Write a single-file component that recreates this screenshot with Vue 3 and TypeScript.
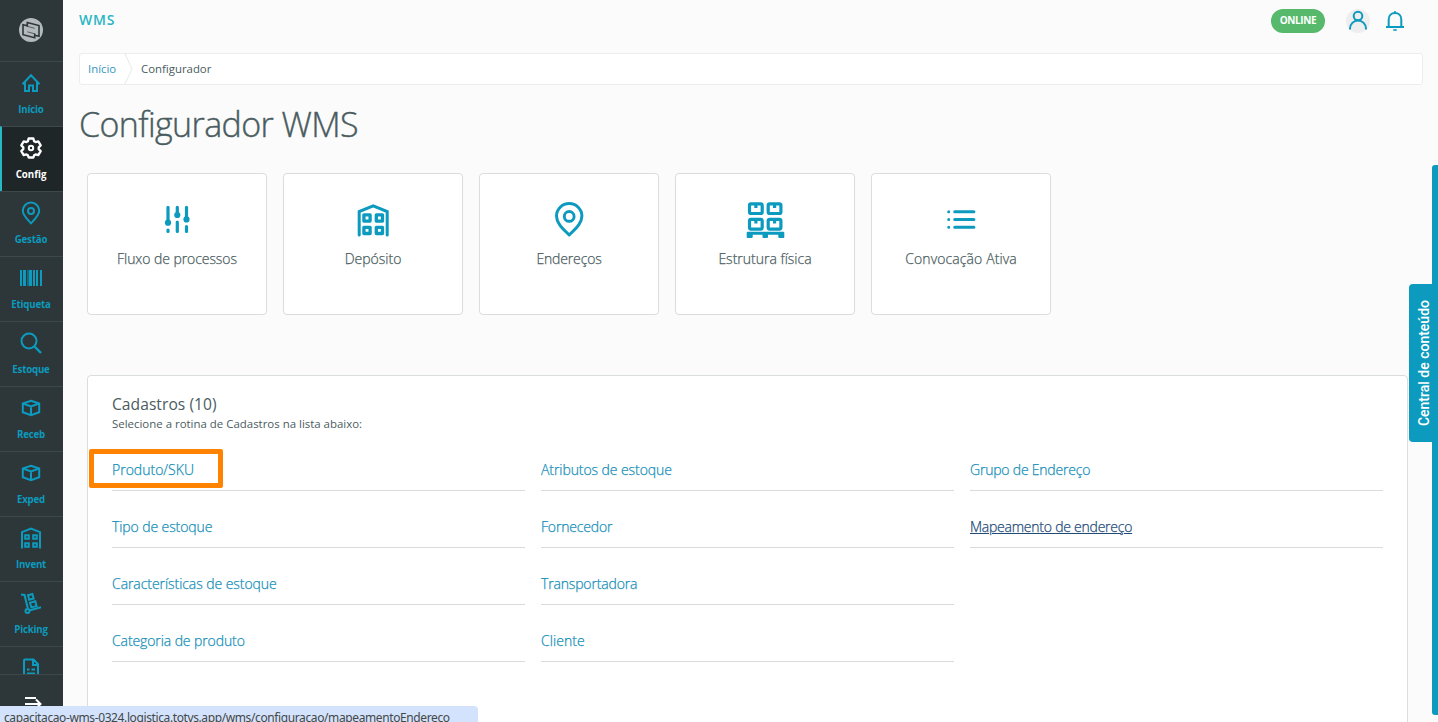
<script setup lang="ts">
interface MenuItem { label: string; icon: string; active?: boolean }
interface Shortcut { label: string; icon: string; tracking: number }
interface Routine { label: string; tracking: number; marked?: boolean; hovered?: boolean }

const menu: MenuItem[] = [
  { label: 'Início', icon: 'home' },
  { label: 'Config', icon: 'gear', active: true },
  { label: 'Gestão', icon: 'pin' },
  { label: 'Etiqueta', icon: 'barcode' },
  { label: 'Estoque', icon: 'search' },
  { label: 'Receb', icon: 'box' },
  { label: 'Exped', icon: 'box' },
  { label: 'Invent', icon: 'warehouse' },
  { label: 'Picking', icon: 'truck' },
  { label: '', icon: 'document' },
]

const shortcuts: Shortcut[] = [
  { label: 'Fluxo de processos', icon: 'sliders', tracking: -0.07 },
  { label: 'Depósito', icon: 'depot', tracking: 0 },
  { label: 'Endereços', icon: 'place', tracking: -0.15 },
  { label: 'Estrutura física', icon: 'pallet', tracking: 0 },
  { label: 'Convocação Ativa', icon: 'list', tracking: 0.1 },
]

const routines: Routine[] = [
  { label: 'Produto/SKU', tracking: 0, marked: true },
  { label: 'Tipo de estoque', tracking: -0.1 },
  { label: 'Características de estoque', tracking: -0.06 },
  { label: 'Categoria de produto', tracking: -0.1 },
  { label: 'Atributos de estoque', tracking: -0.08 },
  { label: 'Fornecedor', tracking: -0.18 },
  { label: 'Transportadora', tracking: -0.16 },
  { label: 'Cliente', tracking: 0.05 },
  { label: 'Grupo de Endereço', tracking: -0.21 },
  { label: 'Mapeamento de endereço', tracking: -0.24, hovered: true },
]
</script>

<template>
  <div class="app">
    <svg class="sprite" aria-hidden="true">
      <symbol id="home" viewBox="0 0 24 24"><path d="M3.500 13.200 12 4.300l8.500 8.900M6 11v9h4v-5.500h4V20h4v-9" /></symbol>
      <symbol id="gear" viewBox="0 0 24 24">
        <path d="M9.600 2.500h4.800l.7 2.700 1.500.9 2.700-.8 2.400 4.100-2 2v1.700l2 2-2.400 4.100-2.700-.8-1.500.9-.7 2.200H9.600l-.7-2.200-1.500-.9-2.700.8-2.400-4.100 2-2v-1.700l-2-2 2.400-4.100 2.700.8 1.500-.9z" stroke-width="2.300" stroke-linejoin="round" />
        <circle cx="12" cy="12" r="2.200" />
      </symbol>
      <symbol id="pin" viewBox="0 0 24 24"><path d="M12 22.300C8 18.200 3.800 14.300 3.800 9.800a8.200 8.200 0 0 1 16.400 0c0 4.500-4.200 8.400-8.200 12.500z" /><circle cx="12" cy="10" r="3" /></symbol>
      <symbol id="barcode" viewBox="0 0 24 24"><path class="solid" d="M1 4h2v16H1zM4 4h3v16H4zM8.500 4h1v16h-1zM10 4h3v16h-3zM14 4h2v16h-2zM17 4h2v16h-2zM21 4h2v16h-2z" /></symbol>
      <symbol id="search" viewBox="0 0 24 24"><circle cx="10" cy="10" r="7.500" /><path d="m15.500 15.500 6.500 6.500" stroke-width="2.400" /></symbol>
      <symbol id="box" viewBox="0 0 24 24"><path d="m12 4.800 8.200 2.700v8.700L12 19.300l-8.200-3.100V7.500zM4 7.500l8 3 8-3M12 10.500v8.800" /></symbol>
      <symbol id="warehouse" viewBox="0 0 24 24"><path d="M3 22.500V6.200L12 2.500l9 3.700v16.300" /><path d="M6.200 9.200h3.600v3.600H6.200zM14.200 9.200h3.600v3.600h-3.600zM6.200 17.200h3.600v3.600H6.200zM14.200 17.200h3.600v3.600h-3.600z" /></symbol>
      <symbol id="truck" viewBox="0 0 24 24"><path d="M2 3.500 5.500 4 9 18M11 19.200l11-3" /><circle cx="8.500" cy="20" r="2" /><path d="m9 4.300 4.400-1.200 1.200 4.400-4.400 1.200zM11 11.700l5.300-1.400 1.300 4.700-5.300 1.400z" /></symbol>
      <symbol id="document" viewBox="0 0 24 24"><path d="M5 22V4.500q0-1 1-1h8.500L19 8.200V22M14 3.500V9h5M8 13.500h2.500M12.500 13.500H16M8 17.500h8" /></symbol>
      <symbol id="sliders" viewBox="0 0 40 40"><path d="M11 8.300v16M11 31v1.500M20.300 8.300v8M20.300 23v9.500M29.500 8.300v12M29.500 27.500v5" stroke-width="3.200" stroke-linecap="round" /><path class="solid" d="M7.900 23.700a3.100 3.100 0 1 0 6.200 0 3.100 3.100 0 1 0-6.200 0M17.200 16a3.100 3.100 0 1 0 6.200 0 3.100 3.100 0 1 0-6.200 0M26.400 20.400a3.100 3.100 0 1 0 6.200 0 3.100 3.100 0 1 0-6.200 0" /></symbol>
      <symbol id="depot" viewBox="0 0 40 40"><path d="M6.200 36V12.500L20.200 6.800l14 5.700V36" stroke-linecap="round" /><path d="M10.900 15.900h6.200v6.200h-6.200zM23.300 15.900h6.200v6.200h-6.200zM10.900 28.300h6.200v6.200h-6.200zM23.300 28.300h6.200v6.200h-6.200z" stroke-linejoin="round" stroke-width="3.300" /></symbol>
      <symbol id="place" viewBox="0 0 40 40"><path d="M20.200 36C14 29.800 7.500 24.500 7.500 17a12.700 12.400 0 0 1 25.400 0C32.900 24.500 26.400 29.800 20.200 36z" stroke-width="3" stroke-linejoin="round" /><circle cx="20.200" cy="17.400" r="4.900" stroke-width="2.900" /></symbol>
      <symbol id="pallet" viewBox="0 0 40 40">
        <g stroke-width="3.200"><rect x="4.500" y="4.800" width="12.700" height="9.700" rx="1.500" /><rect x="23.200" y="4.800" width="12.700" height="9.700" rx="1.500" /><rect x="4.500" y="20.400" width="12.700" height="9.700" rx="1.500" /><rect x="23.200" y="20.400" width="12.700" height="9.700" rx="1.500" /><path d="M10.900 5v4M29.600 5v4M10.900 20.500v4M29.600 20.500v4" /></g>
        <path class="solid" d="M2.700 32.700h35.600q1 0 1 1V38q0 1-1 1h-4q-1 0-1-1v-2.200H23V38q0 1-1 1h-3.500q-1 0-1-1v-2.200H7.700V38q0 1-1 1h-4q-1 0-1-1v-4.300q0-1 1-1z" />
      </symbol>
      <symbol id="list" viewBox="0 0 40 40"><path d="M13.700 12.700h19.200M13.700 20.500h19.200M13.700 28.300h19.200M7.700 12.700h.01M7.700 20.500h.01M7.700 28.300h.01" stroke-width="3" stroke-linecap="round" /></symbol>
    </svg>

    <aside class="sidebar">
      <div class="brand">
        <svg viewBox="0 0 24 24" width="24" height="24">
          <circle cx="12" cy="12" r="12" fill="#b4babb" />
          <path d="M8.300 8.700V4.500l11.700 3v10.700l-4.300-1M15.700 15.500v4.300L4 16.700V6.800l4.300 1" fill="none" stroke="#2d3739" stroke-width="1.600" />
          <path d="m8.300 8.300 7.400 2M8.300 13.800l7.400 2" fill="none" stroke="#2d3739" stroke-width=".7" />
        </svg>
      </div>
      <nav class="menu">
        <a v-for="(item, i) in menu" :key="i" class="menu-item" :class="{ active: item.active }">
          <svg class="icon" width="24" height="24"><use :href="'#' + item.icon" /></svg>
          <span v-if="item.label">{{ item.label }}</span>
        </a>
      </nav>
      <div class="expand">
        <svg width="18" height="14" viewBox="0 0 18 14"><path d="M1 3h11M1 9h15M12 4.500 16.500 9 12 13.500" /></svg>
      </div>
    </aside>

    <main class="page">
      <header class="topbar">
        <strong>WMS</strong>
        <div class="tools">
          <span class="status">ONLINE</span>
          <span class="avatar"><svg class="icon" width="24" height="24" viewBox="0 0 24 24"><circle cx="12" cy="7" r="4.300" /><path d="M4 20.500v-1a8 8 0 0 1 16 0v1" /></svg></span>
          <svg class="icon" width="24" height="24" viewBox="0 0 24 24"><path d="M3 18h18M5.700 18v-7.500c0-4 2.800-6.500 6.300-6.500s6.300 2.500 6.300 6.500V18M12 4.500V2.200" /><path d="M10.300 21h3.400" stroke-width="1.600" /></svg>
        </div>
      </header>
      <div class="breadcrumb">
        <a>Início</a>
        <svg width="9" height="32" viewBox="0 0 9 32"><path d="m.5 0 7.500 16L.5 32" fill="none" stroke="#e6e8e8" /></svg>
        <span>Configurador</span>
      </div>
      <h1>Configurador WMS</h1>
      <section class="shortcuts">
        <a v-for="card in shortcuts" :key="card.label" class="card">
          <svg class="icon" width="40" height="40"><use :href="'#' + card.icon" /></svg>
          <span :style="{ letterSpacing: card.tracking + 'px' }">{{ card.label }}</span>
        </a>
      </section>
      <section class="panel">
        <h2>Cadastros (10)</h2>
        <p>Selecione a rotina de Cadastros na lista abaixo:</p>
        <ul class="routines">
          <li v-for="r in routines" :key="r.label" :class="{ marked: r.marked }">
            <a :class="{ hovered: r.hovered }" :style="{ letterSpacing: r.tracking + 'px' }">{{ r.label }}</a>
          </li>
        </ul>
      </section>
    </main>

    <div class="edge"></div>
    <div class="content-tab"><span>Central de conteúdo</span></div>
    <div class="link-status">capacitacao-wms-0324.logistica.totvs.app/wms/configuracao/mapeamentoEndereco</div>
  </div>
</template>

<style>
html, body { overflow: hidden; }
</style>

<style scoped>
* { box-sizing: border-box; }
.app { position: relative; display: flex; width: 100vw; height: 100vh; overflow: hidden; background: #fbfbfb; color: #4a5c60; font-family: "Open Sans", "Noto Sans", sans-serif; font-size: 14px; }
.sprite { position: absolute; width: 0; height: 0; }
.icon { display: block; flex: none; fill: none; stroke: #0c9abe; stroke-width: 2; color: #0c9abe; }
.solid { fill: currentColor; stroke: none; }

.sidebar { flex: none; display: flex; flex-direction: column; width: 63px; height: 100%; background: #2d3739; }
.brand { flex: none; display: flex; justify-content: center; height: 61px; padding: 17.5px 1px 0 0; }
.menu { flex: none; height: 613px; overflow: hidden; }
.menu-item { display: flex; flex-direction: column; align-items: center; height: 65px; padding: 9px 1px 0 0; border-top: 1px solid #3d484a; color: #0c9abe; font: 700 9.700px/14px "Open Sans", sans-serif; letter-spacing: -.2px; }
.menu-item span { margin-top: 8px; }
.menu-item.active { border-left: 2px solid #29b6c5; padding-right: 3px; background: #1e2628; color: #fff; letter-spacing: 0; }
.active .icon { stroke: #fff; color: #fff; }
.expand { flex: 1; display: flex; justify-content: center; padding: 20px 0 0 3px; border-top: 1px solid #3d484a; }
.expand svg { fill: none; stroke: #fff; stroke-width: 2; }

.page { flex: 1; min-width: 0; padding: 0 15px 0 16px; }
.topbar { display: flex; justify-content: space-between; height: 53px; color: #29b6c5; }
.topbar strong { margin-top: 10px; font-size: 14px; line-height: 19px; font-weight: 600; letter-spacing: .8px; }
.tools { display: flex; align-items: center; gap: 21px; height: 24px; margin: 9px 16px 0 0; }
.status { width: 54px; height: 24px; border-radius: 12px; background: #56b96b; color: #fff; font-size: 10px; font-weight: 700; line-height: 23px; text-align: center; letter-spacing: -.35px; }
.avatar { width: 24px; height: 24px; margin-right: -8px; border-radius: 50%; background: #eee; }
.breadcrumb { display: flex; align-items: center; height: 32px; padding-left: 8px; border: 1px solid #eceeee; border-radius: 3px; background: #fff; font-size: 11.400px; line-height: 16px; }
.breadcrumb a { width: 36px; padding-bottom: 1px; color: #3395c2; }
.breadcrumb span { margin-left: 8px; padding-bottom: 1px; }
h1 { margin: 15px 0 0; font-size: 34px; line-height: 48px; font-weight: 300; letter-spacing: -.6px; white-space: nowrap; -webkit-text-stroke: .4px currentColor; }
.shortcuts { display: flex; gap: 16px; margin: 25px 0 0 8px; }
.card { display: flex; flex-direction: column; align-items: center; width: 180px; height: 142px; padding-top: 25px; border: 1px solid #dadddd; border-radius: 4px; background: #fff; font-size: 14px; font-weight: 300; line-height: 20px; white-space: nowrap; -webkit-text-stroke: .25px currentColor; }
.card .icon { stroke-width: 3; }
.card span { margin-top: 10px; }
.panel { width: 1321px; height: 400px; margin: 60px 0 0 8px; padding: 17px 24px; border: 1px solid #dadddd; border-radius: 4px; background: #fff; }
h2 { margin: 0; font-size: 15.600px; line-height: 22px; font-weight: 400; letter-spacing: .05px; }
.panel p { margin: 0; font-size: 11.450px; line-height: 18px; }
.routines { display: grid; grid-template: repeat(4, 57px) / repeat(3, 413px); grid-auto-flow: column; column-gap: 16px; margin: 1px 0 0; padding: 0; list-style: none; font-size: 14px; font-weight: 300; -webkit-text-stroke: .25px currentColor; }
.routines li { position: relative; padding: 26px 0 0; border-bottom: 1px solid #d8dbdb; line-height: 20px; color: #158fb8; }
.routines .hovered { color: #234b78; text-decoration: underline; }
.marked::after { content: ""; box-sizing: border-box; position: absolute; left: -23px; top: 15px; width: 134px; height: 39px; border: 5px solid #ff8200; border-radius: 2px; }

.edge { position: absolute; right: 0; top: 165px; width: 6px; height: 550px; border-radius: 3px 0 0 3px; background: #0c9abe; }
.content-tab { position: absolute; right: 0; top: 284px; display: flex; align-items: center; justify-content: center; width: 29px; height: 158px; border-radius: 4px 0 0 4px; background: #0c9abe; color: #fff; font: 500 14px/20px Roboto, sans-serif; }
.content-tab span { writing-mode: vertical-rl; transform: rotate(180deg); white-space: nowrap; }
.link-status { position: absolute; left: 0; bottom: 0; width: 478px; height: 16px; padding-left: 4px; overflow: hidden; border-top-right-radius: 4px; background: #d3e3fd; color: #454746; font: 12px/23px "Noto Sans", sans-serif; letter-spacing: -.39px; white-space: nowrap; }
</style>
